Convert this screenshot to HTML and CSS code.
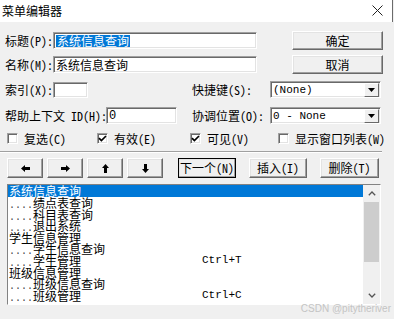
FILE: index.html
```html
<!DOCTYPE html>
<html lang="zh-CN">

<head>
    <meta charset="UTF-8">
    <meta name="viewport" content="width=device-width, initial-scale=1.0">
    <title>菜单编辑器</title>
    <link rel="stylesheet" href="styles.css">
</head>

<body>

    <div class="titlebar">
        <span class="title">菜单编辑器</span>
        <svg class="close" width="11" height="11" viewBox="0 0 11 11">
            <path d="M0.5 0.5 L10.5 10.5 M10.5 0.5 L0.5 10.5" stroke="#222" stroke-width="1" fill="none" />
        </svg>
    </div>

    <div class="dialog">
        <div class="row row-name">
            <span class="lbl lbl-top">标题(P):</span>
            <span class="field field-wide"><span class="selected-text">系统信息查询</span></span>
            <button class="btn btn-side">确定</button>
        </div>

        <div class="row row-name second">
            <span class="lbl lbl-top">名称(M):</span>
            <span class="field field-wide">系统信息查询</span>
            <button class="btn btn-side">取消</button>
        </div>

        <div class="row row-field third">
            <div class="cell-left">
                <span class="lbl lbl-top">索引(X):</span>
                <span class="field field-index"></span>
            </div>
            <span class="lbl lbl-right">快捷键(S):</span>
            <div class="combo">
                <span class="combo-text">(None)</span>
                <span class="combo-btn">
                    <svg width="7" height="4" viewBox="0 0 7 4"><path d="M0 0 H7 L3.5 4 Z" fill="#000" /></svg>
                </span>
            </div>
        </div>

        <div class="row row-field fourth">
            <div class="cell-left">
                <span class="lbl lbl-help">帮助上下文 ID(H):</span>
                <span class="field field-help">0</span>
            </div>
            <span class="lbl lbl-right">协调位置(O):</span>
            <div class="combo">
                <span class="combo-text">0 - None</span>
                <span class="combo-btn">
                    <svg width="7" height="4" viewBox="0 0 7 4"><path d="M0 0 H7 L3.5 4 Z" fill="#000" /></svg>
                </span>
            </div>
        </div>

        <div class="row row-checks">
            <label class="check check-1"><span class="box"></span>复选(C)</label>
            <label class="check check-2"><span class="box"><svg width="9" height="9" viewBox="0 0 9 9"><path d="M1 4.2 L3.4 6.6 L8 2" stroke="#000" stroke-width="1.7" fill="none" /></svg></span>有效(E)</label>
            <label class="check check-3"><span class="box"><svg width="9" height="9" viewBox="0 0 9 9"><path d="M1 4.2 L3.4 6.6 L8 2" stroke="#000" stroke-width="1.7" fill="none" /></svg></span>可见(V)</label>
            <label class="check check-4"><span class="box"></span>显示窗口列表(W)</label>
        </div>

        <div class="separator"></div>

        <div class="row row-buttons">
            <button class="btn btn-arrow">
                <svg width="9" height="7" viewBox="0 0 9 7"><path d="M0 3.5 L4 0 V2 H9 V5 H4 V7 Z" fill="#000" /></svg>
            </button>
            <button class="btn btn-arrow">
                <svg width="9" height="7" viewBox="0 0 9 7"><path d="M9 3.5 L5 0 V2 H0 V5 H5 V7 Z" fill="#000" /></svg>
            </button>
            <button class="btn btn-arrow">
                <svg width="7" height="9" viewBox="0 0 7 9"><path d="M3.5 0 L7 4 H5 V9 H2 V4 H0 Z" fill="#000" /></svg>
            </button>
            <button class="btn btn-arrow">
                <svg width="7" height="9" viewBox="0 0 7 9"><path d="M3.5 9 L7 5 H5 V0 H2 V5 H0 Z" fill="#000" /></svg>
            </button>
            <button class="btn btn-action btn-default">下一个(N)</button>
            <button class="btn btn-action">插入(I)</button>
            <button class="btn btn-action btn-delete">删除(T)</button>
        </div>

        <div class="menu-list">
            <ul class="items">
                <li class="item active"><span class="name">系统信息查询</span></li>
                <li class="item"><span class="name"><span class="dots">....</span>绩点表查询</span></li>
                <li class="item"><span class="name"><span class="dots">....</span>科目表查询</span></li>
                <li class="item"><span class="name"><span class="dots">....</span>退出系统</span></li>
                <li class="item"><span class="name">学生信息管理</span></li>
                <li class="item"><span class="name"><span class="dots">....</span>学生信息查询</span></li>
                <li class="item"><span class="name"><span class="dots">....</span>学生管理</span><span class="key">Ctrl+T</span></li>
                <li class="item"><span class="name">班级信息管理</span></li>
                <li class="item"><span class="name"><span class="dots">....</span>班级信息查询</span></li>
                <li class="item"><span class="name"><span class="dots">....</span>班级管理</span><span class="key">Ctrl+C</span></li>
            </ul>
            <div class="scrollbar">
                <span class="sb-arrow">
                    <svg width="8" height="5" viewBox="0 0 8 5"><path d="M0.8 4.2 L4 1 L7.2 4.2" stroke="#555" stroke-width="1.3" fill="none" /></svg>
                </span>
                <div class="sb-track"><div class="sb-thumb"></div></div>
                <span class="sb-arrow">
                    <svg width="8" height="5" viewBox="0 0 8 5"><path d="M0.8 0.8 L4 4 L7.2 0.8" stroke="#555" stroke-width="1.3" fill="none" /></svg>
                </span>
            </div>
        </div>
    </div>

    <div class="watermark">CSDN @pitytheriver</div>

</body>

</html>
```

FILE: styles.css
```css
* {
    box-sizing: border-box;
}

body {
    margin: 0;
    width: 394px;
    height: 319px;
    overflow: hidden;
    position: relative;
    background: #f0f0f0;
    color: #000;
    font-family: "Noto Sans Mono CJK SC", "Noto Sans CJK SC", sans-serif;
    font-size: 12px;
    line-height: 12px;
}

/* title bar */
.titlebar {
    width: 393px;
    height: 22px;
    background: #fff;
    border-right: 1px solid #6b6b6b;
    display: flex;
    align-items: center;
    justify-content: space-between;
    padding: 0 9px 0 2px;
}

.title {
    font-family: "Noto Sans CJK SC", sans-serif;
    font-size: 12px;
    margin-top: -1px;
}

.close {
    display: block;
    margin-top: -2px;
}

/* dialog body */
.dialog {
    padding: 9px 11px 0 5px;
}

.row {
    display: flex;
    align-items: center;
}

.row-name {
    height: 19px;
}

.row-name.second {
    margin-top: 5px;
}

.row-field {
    height: 17px;
}

.row-field.third {
    margin-top: 7px;
}

.row-field.fourth {
    margin-top: 9px;
}

.lbl {
    white-space: nowrap;
    flex-shrink: 0;
}

.lbl-top {
    width: 48px;
}

.lbl-help {
    width: 101px;
}

.lbl-right {
    width: 78px;
}

.cell-left {
    width: 187px;
    display: flex;
    align-items: center;
}

/* sunken edit boxes */
.field {
    height: 17px;
    background: #fff;
    border: 1px solid;
    border-color: #a0a0a0 #fff #fff #a0a0a0;
    box-shadow: inset 1px 1px 0 #696969, inset -1px -1px 0 #e3e3e3;
    padding: 1px 0 0 2px;
    display: flex;
    align-items: center;
    white-space: nowrap;
    font-family: "Noto Sans CJK SC", sans-serif;
}

.field-wide {
    width: 204px;
}

.field-index {
    width: 35px;
    height: 16px;
}

.field-help {
    width: 71px;
    font-family: "Liberation Mono", monospace;
}

.selected-text {
    background: #0078d7;
    color: #fff;
    padding: 0 1px;
    line-height: 12px;
}

/* raised buttons */
.btn {
    font: inherit;
    color: #000;
    background: #f0f0f0;
    border: 1px solid;
    border-color: #fff #696969 #696969 #fff;
    box-shadow: inset -1px -1px 0 #a0a0a0, inset 1px 1px 0 #e3e3e3;
    padding: 0;
    display: flex;
    align-items: center;
    justify-content: center;
    white-space: nowrap;
}

.btn-side {
    margin-left: auto;
    width: 91px;
    height: 19px;
    font-family: "Noto Sans CJK SC", sans-serif;
}

/* combo boxes */
.combo {
    width: 111px;
    height: 17px;
    background: #fff;
    border: 1px solid;
    border-color: #a0a0a0 #fff #fff #a0a0a0;
    box-shadow: inset 1px 1px 0 #696969, inset -1px -1px 0 #e3e3e3;
    display: flex;
    align-items: center;
    padding: 1px 1px 1px 2px;
}

.combo-text {
    flex: 1;
    font-family: "Liberation Mono", monospace;
    font-size: 11px;
    white-space: nowrap;
}

.combo-btn {
    width: 15px;
    height: 14px;
    background: #f0f0f0;
    border: 1px solid;
    border-color: #fff #696969 #696969 #fff;
    display: flex;
    align-items: center;
    justify-content: center;
}

.combo-btn svg {
    display: block;
}

/* check boxes */
.row-checks {
    margin-top: 9px;
    height: 11px;
}

.check {
    display: flex;
    align-items: center;
    gap: 6px;
    white-space: nowrap;
    flex-shrink: 0;
}

.check-1 {
    width: 92px;
    padding-left: 2px;
}

.check-2 {
    width: 93px;
}

.check-3 {
    width: 88px;
}

.box {
    width: 11px;
    height: 11px;
    background: #fff;
    border: 1px solid;
    border-color: #a0a0a0 #fff #fff #a0a0a0;
    box-shadow: inset 1px 1px 0 #696969, inset -1px -1px 0 #e3e3e3;
    display: flex;
    align-items: center;
    justify-content: center;
}

.box svg {
    display: block;
}

.separator {
    margin: 7px 0 0 -5px;
    width: 382px;
    height: 2px;
    border-top: 1px solid #a0a0a0;
    border-bottom: 1px solid #fff;
}

/* button strip */
.row-buttons {
    margin-top: 5px;
    height: 20px;
    padding-left: 2px;
    gap: 4px;
}

.btn-arrow {
    width: 36px;
    height: 20px;
}

.btn-arrow svg {
    display: block;
}

.btn-action {
    width: 58px;
    height: 20px;
    margin-left: 9px;
}

.btn-default {
    margin-left: 11px;
    outline: 1px solid #000;
    outline-offset: -1px;
}

.btn-delete {
    width: 59px;
}

/* menu list */
.menu-list {
    margin: 6px 0 0 2px;
    width: 374px;
    height: 121px;
    background: #fff;
    border: 1px solid;
    border-color: #828282 #fff #fff #828282;
    display: flex;
}

.items {
    list-style: none;
    margin: 0;
    padding: 0;
    flex: 1;
    font-family: "Noto Sans CJK SC", sans-serif;
}

.item {
    display: flex;
    height: 11.6px;
    line-height: 11.6px;
    padding-left: 1px;
    white-space: nowrap;
}

.item.active {
    background: #0078d7;
    color: #fff;
    height: 12px;
}

.name {
    width: 193px;
}

.dots {
    display: inline-block;
    width: 24px;
    font-family: "Liberation Mono", monospace;
    font-size: 10px;
    color: #444;
}

.key {
    font-family: "Liberation Mono", monospace;
    font-size: 11px;
}

.scrollbar {
    width: 17px;
    background: #f0f0f0;
    display: flex;
    flex-direction: column;
}

.sb-arrow {
    height: 17px;
    display: flex;
    align-items: center;
    justify-content: center;
}

.sb-arrow svg {
    display: block;
}

.sb-track {
    flex: 1;
}

.sb-thumb {
    height: 60px;
    margin: 0 1px;
    background: #cdcdcd;
}

.watermark {
    position: absolute;
    right: 3px;
    bottom: 5px;
    font-family: "Liberation Sans", sans-serif;
    font-size: 10px;
    line-height: 10px;
    color: #c4c4c4;
}
```
